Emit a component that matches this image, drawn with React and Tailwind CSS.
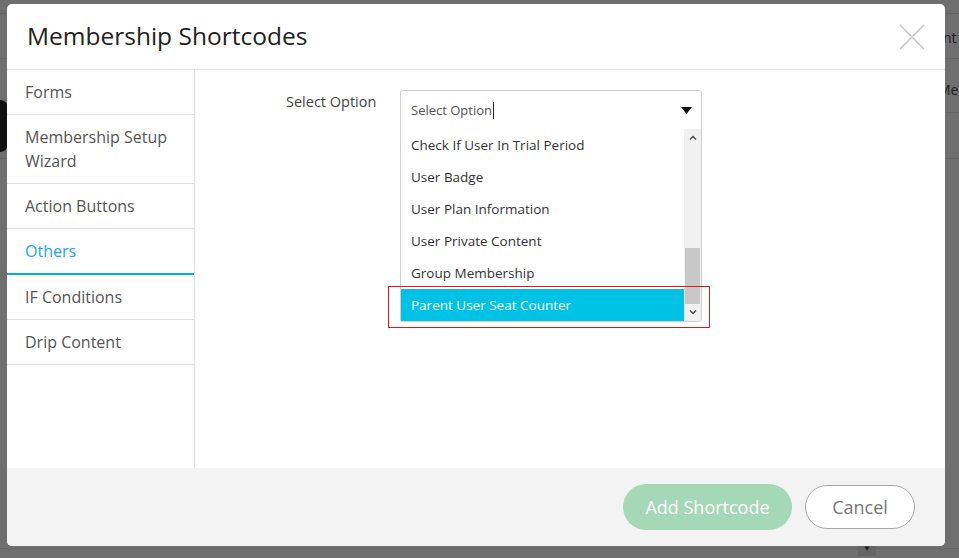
import React from 'react';

const tabs = [
  { id: 'forms', label: 'Forms' },
  { id: 'wizard', label: 'Membership Setup Wizard' },
  { id: 'actions', label: 'Action Buttons' },
  { id: 'others', label: 'Others' },
  { id: 'if', label: 'IF Conditions' },
  { id: 'drip', label: 'Drip Content' },
];

const options = [
  'Check If User In Trial Period',
  'User Badge',
  'User Plan Information',
  'User Private Content',
  'Group Membership',
  'Parent User Seat Counter',
];

function CloseIcon() {
  return (
    <svg width="26" height="26" viewBox="0 0 26 26" fill="none">
      <path d="M1 1L25 25M25 1L1 25" stroke="#c8c8c8" strokeWidth="1.6" />
    </svg>
  );
}

export default function App() {
  const active = 'others';
  const selected = 'Parent User Seat Counter';

  return (
    <div
      className="relative h-[558px] w-[959px] overflow-hidden bg-[#6f6f6f]"
      style={{ fontFamily: '"Open Sans", "Noto Sans", sans-serif' }}
    >
      {/* dimmed page behind the overlay */}
      <div className="flex flex-col pt-[13px]">
        <div className="h-[45px] border-t border-[#646464] pl-[943px] pt-[17px] text-[14px] leading-[14px] text-[#1c1c1c]">nt</div>
        <div className="h-[54px] border-t border-[#646464] pl-[938px] pt-[24px] text-[14px] leading-[14px] text-[#1c1c1c]">Mer</div>
        <div className="h-[46px] border-t border-[#646464] pl-[936px] pt-[25px] text-[14px] leading-[14px] text-[#1c1c1c]">d</div>
        <div className="border-t border-[#646464]" />
      </div>
      <div className="absolute left-[-10px] top-[100px] h-[52px] w-[18px] rounded-[8px] bg-[#111]" />
      <div className="absolute bottom-0 left-0 right-0 h-[10px] border-t border-[#666]" />
      <div className="absolute left-[858px] top-[540px] flex h-[16px] w-[18px] items-center justify-center bg-[#666] text-[8px] text-[#222]">▼</div>

      {/* modal */}
      <div className="absolute left-[7px] top-[4px] flex h-[542px] w-[938px] flex-col overflow-hidden rounded-[5px] bg-white">
        <div className="flex h-[66px] shrink-0 items-center justify-between border-b border-[#e3e3e3] pl-[20px] pr-[20px]">
          <h1 className="text-[24.5px] font-normal text-[#222]">Membership Shortcodes</h1>
          <CloseIcon />
        </div>

        <div className="flex flex-1">
          <ul className="w-[188px] shrink-0 border-r border-[#dde1e8]">
            {tabs.map((t) =>
              t.id === active ? (
                <li
                  key={t.id}
                  className="border-b-2 border-[#00aeef] px-[18px] py-[9px] text-[16px] leading-[26px] text-[#1ba6e6]"
                >
                  {t.label}
                </li>
              ) : (
                <li
                  key={t.id}
                  className="border-b border-[#dde1e8] px-[18px] py-[10px] text-[16px] leading-[24px] text-[#555]"
                >
                  {t.label}
                </li>
              )
            )}
          </ul>

          <div className="flex flex-1 items-start pl-[91px] pt-[20px]">
            <label className="w-[114px] pt-[1px] text-[14.5px] leading-[22px] text-[#444]">Select Option</label>

            <div className="relative">
              <div className="w-[302px] rounded-[3px] border border-[#cfcfcf] bg-white">
                <div className="flex h-[38px] items-center justify-between pl-[10px] pr-[9px]">
                  <span className="flex items-center pt-[1px] text-[13px] text-[#555]">
                    Select Option
                    <span className="ml-[1px] inline-block h-[17px] w-[1px] bg-[#222]" />
                  </span>
                  <svg width="11" height="7" viewBox="0 0 11 7">
                    <path d="M0 0H11L5.5 7Z" fill="#111" />
                  </svg>
                </div>

                <div className="flex">
                  <ul className="flex-1">
                    {options.map((o) => (
                      <li
                        key={o}
                        className={
                          o === selected
                            ? 'flex h-[32px] items-center bg-[#00c2e6] pl-[10px] pt-[1px] text-[13.5px] text-white'
                            : 'flex h-[32px] items-center pl-[10px] pt-[1px] text-[13.5px] text-[#333]'
                        }
                      >
                        {o}
                      </li>
                    ))}
                  </ul>
                  <div className="flex w-[17px] flex-col bg-[#f0f0f0]">
                    <div className="flex h-[17px] items-center justify-center">
                      <svg width="8" height="5" viewBox="0 0 8 5">
                        <path d="M1 4.5L4 1.5L7 4.5" stroke="#505050" strokeWidth="1.5" fill="none" />
                      </svg>
                    </div>
                    <div className="flex-1 pt-[102px]">
                      <div className="ml-[1px] h-[56px] w-[15px] bg-[#c8c8c8]" />
                    </div>
                    <div className="flex h-[17px] items-center justify-center">
                      <svg width="8" height="5" viewBox="0 0 8 5">
                        <path d="M1 0.5L4 3.5L7 0.5" stroke="#505050" strokeWidth="1.5" fill="none" />
                      </svg>
                    </div>
                  </div>
                </div>
              </div>

              {/* highlight box around the selected option */}
              <div className="pointer-events-none absolute left-[-12px] top-[196px] h-[42px] w-[322px] border border-[#e0161b]" />
            </div>
          </div>
        </div>

        <div className="flex h-[78px] shrink-0 items-center justify-end gap-[13px] bg-[#f3f3f3] pr-[30px]">
          <button className="h-[46px] w-[169px] rounded-full bg-[#a5d8b6] text-[18px] text-white">Add Shortcode</button>
          <button className="h-[44px] w-[110px] rounded-full border border-[#a8a8a8] bg-white text-[18px] text-[#777]">Cancel</button>
        </div>
      </div>
    </div>
  );
}
